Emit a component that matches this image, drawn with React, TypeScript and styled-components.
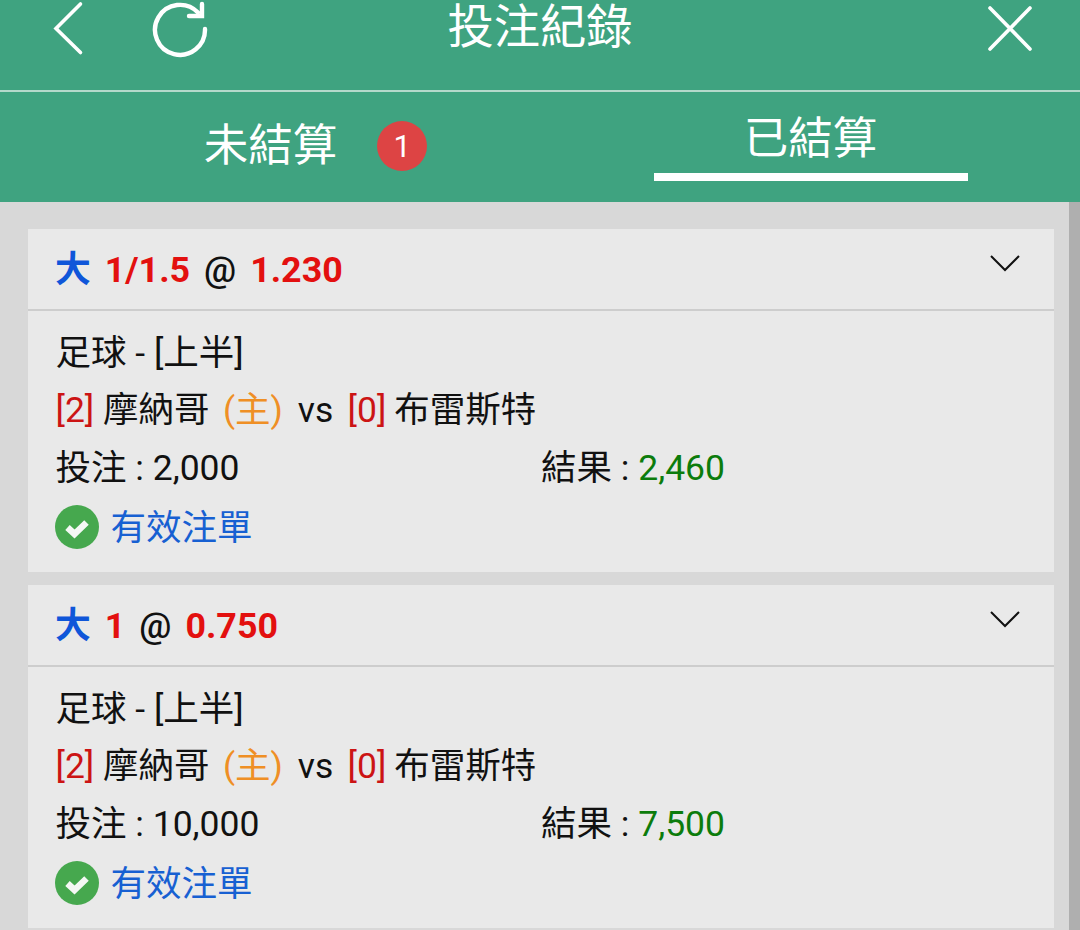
import styled, { createGlobalStyle } from 'styled-components';

const GlobalStyle = createGlobalStyle`
  html, body {
    margin: 0;
    padding: 0;
    height: 930px;
    overflow: hidden;
    background: #d8d8d8;
  }
  * {
    box-sizing: border-box;
  }
`;

const Page = styled.div`
  width: 1080px;
  height: 930px;
  overflow: hidden;
  font-family: Roboto, 'Noto Sans CJK TC', sans-serif;
  color: #111;
`;

const TopBar = styled.header`
  position: relative;
  display: flex;
  align-items: flex-start;
  justify-content: space-between;
  height: 92px;
  padding: 0 48px 0 52px;
  background: #3fa380;
  border-bottom: 2px solid #b4d9cb;
`;

const TopActions = styled.div`
  display: flex;
  gap: 68px;
`;

const IconButton = styled.button<{ $w: number }>`
  display: block;
  width: ${(p) => p.$w}px;
  height: 58px;
  padding: 0;
  border: none;
  background: none;
`;

const Title = styled.h1`
  position: absolute;
  left: 0;
  right: 0;
  top: 2px;
  margin: 0;
  text-align: center;
  font-size: 46.3px;
  line-height: 50px;
  font-weight: 400;
  color: #fff;
`;

const Tabs = styled.nav`
  display: grid;
  grid-template-columns: 540px 540px;
  height: 110px;
  background: #3fa380;
`;

const Tab = styled.div`
  position: relative;
  display: flex;
  justify-content: center;
`;

const TabLabel = styled.span`
  font-size: 44.5px;
  line-height: 60px;
  color: #fff;
`;

const PendingLabel = styled(TabLabel)`
  margin: 24px 40px 0 91px;
`;

const SettledLabel = styled(TabLabel)`
  margin: 17px 0 0 1px;
`;

const Badge = styled.span`
  display: flex;
  align-items: center;
  justify-content: center;
  width: 50px;
  height: 50px;
  margin-top: 29px;
  border-radius: 50%;
  background: #dd4444;
  color: #fff;
  font-size: 31px;
`;

const Underline = styled.span`
  position: absolute;
  left: 114px;
  top: 81px;
  width: 314px;
  height: 8px;
  background: #fff;
`;

const Content = styled.main`
  display: flex;
  flex-direction: column;
  gap: 13px;
  height: 728px;
  padding: 27px 15px 0 28px;
  border-right: 11px solid #afafaf;
`;

const Card = styled.section`
  flex: none;
  width: 1026px;
  background: #e9e9e9;
`;

const CardHeader = styled.div`
  display: flex;
  align-items: center;
  justify-content: space-between;
  height: 82px;
  padding: 0 33px 2px 27px;
  border-bottom: 2px solid #cdcdcd;
`;

const Odds = styled.div`
  display: flex;
  align-items: baseline;
  gap: 14px;
  margin-top: -5px;
  font-size: 35.8px;
  font-weight: 700;
`;

const Side = styled.span`
  color: #0f56d9;
`;

const Hot = styled.span`
  color: #e3100f;
`;

const At = styled.span`
  color: #111;
  font-weight: 500;
`;

const Chevron = styled.svg`
  display: block;
  margin-top: -11px;
`;

const CardBody = styled.div`
  display: flex;
  flex-direction: column;
  height: 261px;
  padding: 11px 0 0 27.5px;
`;

const Line = styled.div`
  display: flex;
  align-items: center;
  height: 58.7px;
  font-size: 35.5px;
`;

const LeagueLine = styled(Line)`
  height: 54.7px;
`;

const Half = styled.div`
  width: 485.5px;
`;

const Score = styled.span`
  color: #cc1414;
`;

const AwayScore = styled(Score)`
  margin: 0 -1px 0 5.5px;
`;

const Home = styled.span`
  margin: 0 6px 0 4.5px;
  color: #ef8f25;
`;

const Payout = styled.span`
  color: #0c7c0c;
`;

const Status = styled.span`
  margin: 2px 0 0 11.5px;
  color: #1760d2;
`;

const CheckIcon = styled.svg`
  display: block;
  margin: 8px 0 0 -0.5px;
`;

type Bet = {
  line: string;
  price: string;
  stake: string;
  result: string;
};

const bets: Bet[] = [
  { line: '1/1.5', price: '1.230', stake: '2,000', result: '2,460' },
  { line: '1', price: '0.750', stake: '10,000', result: '7,500' },
];

function BetCard({ bet }: { bet: Bet }) {
  return (
    <Card>
      <CardHeader>
        <Odds>
          <Side>大</Side>
          <Hot>{bet.line}</Hot>
          <At>@</At>
          <Hot>{bet.price}</Hot>
        </Odds>
        <Chevron width="32" height="20" viewBox="0 0 32 20">
          <path d="M2 3 L16 17 L30 3" fill="none" stroke="#111" strokeWidth="2" />
        </Chevron>
      </CardHeader>
      <CardBody>
        <LeagueLine>足球 - [上半]</LeagueLine>
        <Line>
          <span>
            <Score>[2]</Score> 摩納哥 <Home>(主)</Home> vs <AwayScore>[0]</AwayScore> 布雷斯特
          </span>
        </Line>
        <Line>
          <Half>投注 : {bet.stake}</Half>
          <span>
            結果 : <Payout>{bet.result}</Payout>
          </span>
        </Line>
        <Line>
          <CheckIcon width="44" height="44" viewBox="0 0 44 44">
            <circle cx="22" cy="22" r="22" fill="#46a84e" />
            <path d="M12.5 22.5 L19.5 29 L31.5 17.5" fill="none" stroke="#f4f8f4" strokeWidth="6.5" />
          </CheckIcon>
          <Status>有效注單</Status>
        </Line>
      </CardBody>
    </Card>
  );
}

export default function App() {
  return (
    <Page>
      <GlobalStyle />
      <TopBar>
        <Title>投注紀錄</Title>
        <TopActions>
          <IconButton $w={32}>
            <svg width="32" height="58" viewBox="0 0 32 58">
              <path d="M28.5 4 L4 28.5 L28.5 52.5" fill="none" stroke="#fff" strokeWidth="3.6" strokeLinecap="round" />
            </svg>
          </IconButton>
          <IconButton $w={58}>
            <svg width="58" height="58" viewBox="0 0 58 58">
              <path d="M46 12.5 A25 25 0 1 0 53 29" fill="none" stroke="#fff" strokeWidth="4.4" strokeLinecap="round" />
              <path d="M50 4 L50 16 L37 16" fill="none" stroke="#fff" strokeWidth="4.4" strokeLinecap="round" />
            </svg>
          </IconButton>
        </TopActions>
        <IconButton $w={44}>
          <svg width="44" height="58" viewBox="0 0 44 58">
            <path d="M2 8 L42 49 M42 8 L2 49" fill="none" stroke="#fff" strokeWidth="3.6" strokeLinecap="round" />
          </svg>
        </IconButton>
      </TopBar>
      <Tabs>
        <Tab>
          <PendingLabel>未結算</PendingLabel>
          <Badge>1</Badge>
        </Tab>
        <Tab>
          <SettledLabel>已結算</SettledLabel>
          <Underline />
        </Tab>
      </Tabs>
      <Content>
        {bets.map((bet) => (
          <BetCard key={bet.line} bet={bet} />
        ))}
      </Content>
    </Page>
  );
}
